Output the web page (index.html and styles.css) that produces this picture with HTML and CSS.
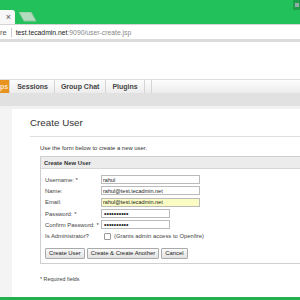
FILE: index.html
```html
<!DOCTYPE html>
<html lang="en">
<head>
    <meta charset="UTF-8">
    <title>Create User</title>
    <link rel="stylesheet" href="styles.css">
</head>
<body>
    <div class="titlebar">
        <div class="tab"><span class="tab-close">&times;</span></div>
        <svg class="newtab" width="18" height="10" viewBox="0 0 18 10">
            <polygon points="0,0 12,0 17,9 5,9" fill="#b3dcbf" stroke="#8fc89f" stroke-width="1"/>
        </svg>
        <div class="winctl"><span></span></div>
    </div>
    <div class="addressbar">
        <span class="secure">re</span>
        <span class="sep"></span>
        <span class="url">test.tecadmin.net<span class="url-rest">:9090/user-create.jsp</span></span>
    </div>
    <div class="page">
        <div class="header"></div>
        <div class="tabs">
            <div class="navtab active">ps</div>
            <div class="navtab">Sessions</div>
            <div class="navtab">Group Chat</div>
            <div class="navtab">Plugins</div>
            <div class="navtab last"></div>
        </div>
        <div class="subnav"></div>
        <div class="container">
            <div class="sidebar"></div>
            <div class="main-content">
                <h1>Create User</h1>
                <p class="intro">Use the form below to create a new user.</p>
                <div class="box">
                    <div class="box-head">Create New User</div>
                    <table class="form">
                        <tr>
                            <td class="lbl">Username: *</td>
                            <td><input type="text" class="wide" value="rahul"></td>
                        </tr>
                        <tr>
                            <td class="lbl">Name:</td>
                            <td><input type="text" class="wide" value="rahul@test.tecadmin.net"></td>
                        </tr>
                        <tr>
                            <td class="lbl">Email:</td>
                            <td><input type="text" class="wide autofill" value="rahul@test.tecadmin.net"></td>
                        </tr>
                        <tr>
                            <td class="lbl">Password: *</td>
                            <td><input type="text" class="narrow dots" value="&#8226;&#8226;&#8226;&#8226;&#8226;&#8226;&#8226;&#8226;&#8226;&#8226;"></td>
                        </tr>
                        <tr>
                            <td class="lbl">Confirm Password: *</td>
                            <td><input type="text" class="narrow dots" value="&#8226;&#8226;&#8226;&#8226;&#8226;&#8226;&#8226;&#8226;&#8226;&#8226;"></td>
                        </tr>
                        <tr>
                            <td class="lbl">Is Administrator?</td>
                            <td class="admin"><span class="check"></span>(Grants admin access to Openfire)</td>
                        </tr>
                    </table>
                    <div class="buttons">
                        <button>Create User</button>
                        <button>Create &amp; Create Another</button>
                        <button>Cancel</button>
                    </div>
                </div>
                <p class="note">* Required fields</p>
            </div>
        </div>
    </div>
    <div class="footer"></div>
</body>
</html>
```

FILE: styles.css
```css
body {
    margin: 0;
    font-family: "Liberation Sans", Arial, sans-serif;
    width: 300px;
    height: 300px;
    overflow: hidden;
    background-color: #fff;
    display: flex;
    flex-direction: column;
}
.titlebar {
    height: 24px;
    background-color: #22c15b;
    display: flex;
    align-items: flex-end;
    flex-shrink: 0;
}
.tab {
    width: 15px;
    height: 14px;
    background-color: #f7f7f7;
    border-top-right-radius: 3px;
    display: flex;
    align-items: center;
    justify-content: flex-end;
}
.tab-close {
    font-size: 9px;
    color: #555;
    margin-right: 4px;
    line-height: 1;
}
.newtab {
    margin: 0 0 2px 4px;
}
.winctl {
    margin-left: auto;
    align-self: flex-start;
    width: 7px;
    height: 10px;
    background-color: #1c9e4a;
    display: flex;
    align-items: center;
    justify-content: center;
}
.winctl span {
    width: 4px;
    height: 4px;
    background-color: #9aa;
}
.addressbar {
    height: 14px;
    background-color: #fff;
    border-top: 1px solid #d4d4d4;
    border-bottom: 3px solid #dcdcdc;
    display: flex;
    align-items: center;
    font-size: 6.8px;
    flex-shrink: 0;
}
.secure {
    color: #555;
    font-size: 7.5px;
}
.sep {
    width: 1px;
    height: 9px;
    background-color: #ccc;
    margin: 0 4px 0 4px;
}
.url {
    color: #222;
}
.url-rest {
    color: #888;
}
.page {
    flex-grow: 1;
    display: flex;
    flex-direction: column;
}
.header {
    height: 37px;
    background-color: #fff;
}
.tabs {
    height: 13px;
    display: flex;
    background: linear-gradient(#fdfdfd, #ececec);
    border-top: 1px solid #ddd;
}
.navtab {
    font-size: 7px;
    font-weight: bold;
    color: #444;
    padding: 0 6px;
    display: flex;
    align-items: center;
    border-right: 1px solid #d4d4d4;
}
.navtab:nth-child(2) {
    padding-left: 7px;
}
.navtab.active {
    background-color: #e8931f;
    color: #fbe6c8;
    padding: 0 1px 0 0;
}
.navtab.last {
    padding: 0 3px;
}
.subnav {
    height: 13px;
    background-color: #e1e1e1;
    border-bottom: 3px solid #f1f1f1;
}
.container {
    flex-grow: 1;
    display: flex;
    background-color: #f6f6f6;
}
.sidebar {
    width: 12px;
    background-color: #f4f4f4;
}
.main-content {
    flex-grow: 1;
    background-color: #fff;
    padding: 0 0 0 18px;
}
h1 {
    margin: 8px 0 0;
    font-size: 9.8px;
    font-weight: normal;
    color: #333;
    padding-bottom: 8px;
    border-bottom: 1px solid #dedede;
}
.intro {
    margin: 8px 0 0 10px;
    font-size: 5.9px;
    color: #333;
}
.box {
    margin: 5px 0 0 10px;
    border: 1px solid #cfcfcf;
    border-right: none;
    padding-bottom: 4px;
}
.box-head {
    height: 11px;
    background-color: #ececec;
    border-bottom: 1px solid #d6d6d6;
    font-size: 5.9px;
    font-weight: bold;
    color: #333;
    padding-left: 3px;
    display: flex;
    align-items: center;
}
.form {
    border-collapse: collapse;
    margin: 5px 0 0 4px;
}
.form td {
    padding: 0;
    height: 11.3px;
    font-size: 5.9px;
    color: #444;
    white-space: nowrap;
}
.form td.lbl {
    width: 56px;
}
input {
    box-sizing: border-box;
    height: 9px;
    border: 1px solid #bbb;
    font-family: "Liberation Sans", Arial, sans-serif;
    font-size: 5.5px;
    padding: 0 1px;
    color: #222;
    display: block;
}
input.wide {
    width: 99px;
}
input.narrow {
    width: 69px;
}
input.autofill {
    background-color: #fbfcc4;
}
input.dots {
    font-size: 7px;
    padding-left: 2px;
}
.admin {
    display: flex;
    align-items: center;
    height: 11.3px;
}
.check {
    width: 5px;
    height: 5px;
    border: 1px solid #999;
    border-radius: 1px;
    margin: 0 3px 0 3px;
}
.buttons {
    display: flex;
    gap: 2px;
    margin: 6px 0 0 4px;
}
button {
    font-family: "Liberation Sans", Arial, sans-serif;
    font-size: 5.9px;
    color: #222;
    height: 11px;
    padding: 0 3px;
    border: 1px solid #aaa;
    border-radius: 1px;
    background: linear-gradient(#fafafa, #e2e2e2);
}
.note {
    margin: 12px 0 0 10px;
    font-size: 5.4px;
    color: #444;
}
.footer {
    height: 3px;
    background-color: #22b14c;
    flex-shrink: 0;
}
```
